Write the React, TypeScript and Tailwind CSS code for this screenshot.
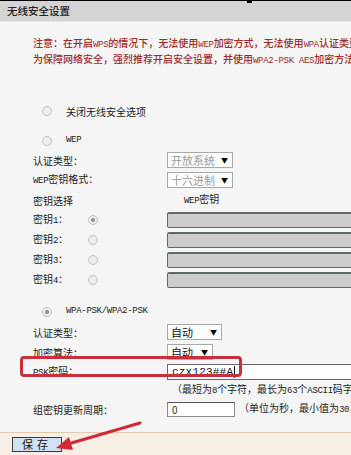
import type { ReactNode } from 'react';

const Lat = ({ children }: { children: ReactNode }) => (
  <span className="text-[9px] tracking-[-0.3px] [font-family:'Liberation_Mono',monospace]">{children}</span>
);

const Radio = ({ checked = false }: { checked?: boolean }) => (
  <span className="inline-flex h-[10px] w-[10px] shrink-0 items-center justify-center rounded-full border border-[#c4c4c4] bg-[#ededed]">
    {checked && <span className="h-[4px] w-[4px] rounded-full bg-[#8c8c8c]" />}
  </span>
);

const Select = ({ text, width, muted = false }: { text: string; width: string; muted?: boolean }) => (
  <div
    className={`flex h-[16px] items-center justify-between border border-[#a9a9a9] bg-white pl-[3px] pr-[4px] text-[11px] ${width} ${
      muted ? 'text-[#9a9a9a]' : 'text-[#111]'
    }`}
  >
    <span>{text}</span>
    <span className="text-[7px] text-black">▼</span>
  </div>
);

const Row = ({ label, children }: { label: ReactNode; children?: ReactNode }) => (
  <div className="flex h-[20px] items-center pl-[33px]">
    <span className="w-[134px] shrink-0">{label}</span>
    {children}
  </div>
);

const KeyRow = ({ n, checked = false }: { n: number; checked?: boolean }) => (
  <div className="flex h-[20px] items-center pl-[33px]">
    <div className="flex w-[134px] shrink-0 items-center">
      <span className="w-[55px]">
        密钥<Lat>{n}</Lat>：
      </span>
      <Radio checked={checked} />
    </div>
    <div className="h-[16px] w-[200px] shrink-0 rounded-[2px] border border-[#5f6b6b] border-t-2 bg-[#cdcdcd]" />
  </div>
);

export default function App() {
  return (
    <div className="relative flex h-[455px] w-[351px] flex-col overflow-hidden bg-[#f5f5f5] text-[10px] text-[#1c1c1c] [font-family:'Noto_Sans_CJK_SC',sans-serif]">
      <div className="h-px bg-black" />
      <div className="absolute left-[247px] top-0 h-[3px] w-[5px] bg-black" />

      {/* header */}
      <div className="flex h-[21px] items-center border-b border-[#e6e6e6] bg-[#d4d4d4] pl-[7px] text-[10.5px] font-medium text-[#222]">
        无线安全设置
      </div>

      {/* notice */}
      <div className="mt-[14px] whitespace-nowrap pl-[33px] font-medium leading-[13px] text-[#a02a28]">
        <div>
          注意：在开启<Lat>WPS</Lat>的情况下，无法使用<Lat>WEP</Lat>加密方式，无法使用<Lat>WPA</Lat>认证类型
        </div>
        <div>
          为保障网络安全，强烈推荐开启安全设置，并使用<Lat>WPA2-PSK AES</Lat>加密方法
        </div>
      </div>

      <div className="mt-[33px] flex h-[20px] items-center gap-[14px] pl-[42px]">
        <Radio />
        <span>关闭无线安全选项</span>
      </div>

      <div className="mt-[11px] flex h-[18px] items-center gap-[14px] pl-[42px]">
        <Radio />
        <Lat>WEP</Lat>
      </div>

      <Row label="认证类型：">
        <Select text="开放系统" width="w-[66px]" muted />
      </Row>
      <Row
        label={
          <>
            <Lat>WEP</Lat>密钥格式：
          </>
        }
      >
        <Select text="十六进制" width="w-[66px]" muted />
      </Row>
      <Row label="密钥选择">
        <span className="pl-[17px]">
          <Lat>WEP</Lat>密钥
        </span>
      </Row>
      <KeyRow n={1} checked />
      <KeyRow n={2} />
      <KeyRow n={3} />
      <KeyRow n={4} />

      <div className="mt-[12px] flex h-[20px] items-center gap-[14px] pl-[42px]">
        <Radio checked />
        <Lat>WPA-PSK/WPA2-PSK</Lat>
      </div>
      <Row label="认证类型：">
        <Select text="自动" width="w-[55px]" />
      </Row>
      <Row label="加密算法：">
        <Select text="自动" width="w-[46px]" />
      </Row>
      <Row
        label={
          <>
            <Lat>PSK</Lat>密码：
          </>
        }
      >
        <div className="flex h-[16px] w-[200px] shrink-0 items-center border border-[#6a6a6a] bg-white pl-[4px] text-[11px] tracking-[0.2px] text-[#111] [font-family:'Liberation_Mono',monospace]">
          czx123##A<span className="ml-px h-[12px] w-px bg-black" />
        </div>
      </Row>
      <div className="flex h-[16px] items-center whitespace-nowrap pl-[172px]">
        <span>
          （最短为<Lat>8</Lat>个字符，最长为<Lat>63</Lat>个<Lat>ASCII</Lat>码字符或<Lat>64</Lat>个十六进制字符）
        </span>
      </div>
      <div className="mt-px flex h-[20px] items-center whitespace-nowrap pl-[33px]">
        <span className="w-[134px] shrink-0">组密钥更新周期：</span>
        <div className="flex h-[15px] w-[68px] shrink-0 items-center border border-[#8a8a8a] border-t-[#555] bg-white pl-[4px] text-[10px] text-[#333]">
          0
        </div>
        <span className="pl-[4px]">
          （单位为秒，最小值为<Lat>30</Lat>，不更新则为<Lat>0</Lat>）
        </span>
      </div>

      {/* bottom bar */}
      <div className="mt-auto flex h-[23px] items-center border-t border-[#e3c9ad] bg-[#f7efe6] pl-[12px]">
        <button className="flex h-[15px] w-[50px] items-center justify-center border border-[#3a3a3a] bg-[#cfe2f3] text-[11px] tracking-[4px] text-[#111]">
          保存
        </button>
      </div>

      {/* annotations */}
      <div className="pointer-events-none absolute left-[20px] top-[356px] h-[21px] w-[222px] rounded-[4px] border-[3px] border-[#c7303c]" />
      <svg className="pointer-events-none absolute left-0 top-0" width="351" height="455" viewBox="0 0 351 455">
        <line x1="140" y1="423" x2="68" y2="444" stroke="#d02a36" strokeWidth="3" strokeLinecap="round" />
        <polygon points="56,448 69,437 73,450" fill="#d02a36" />
      </svg>
    </div>
  );
}
